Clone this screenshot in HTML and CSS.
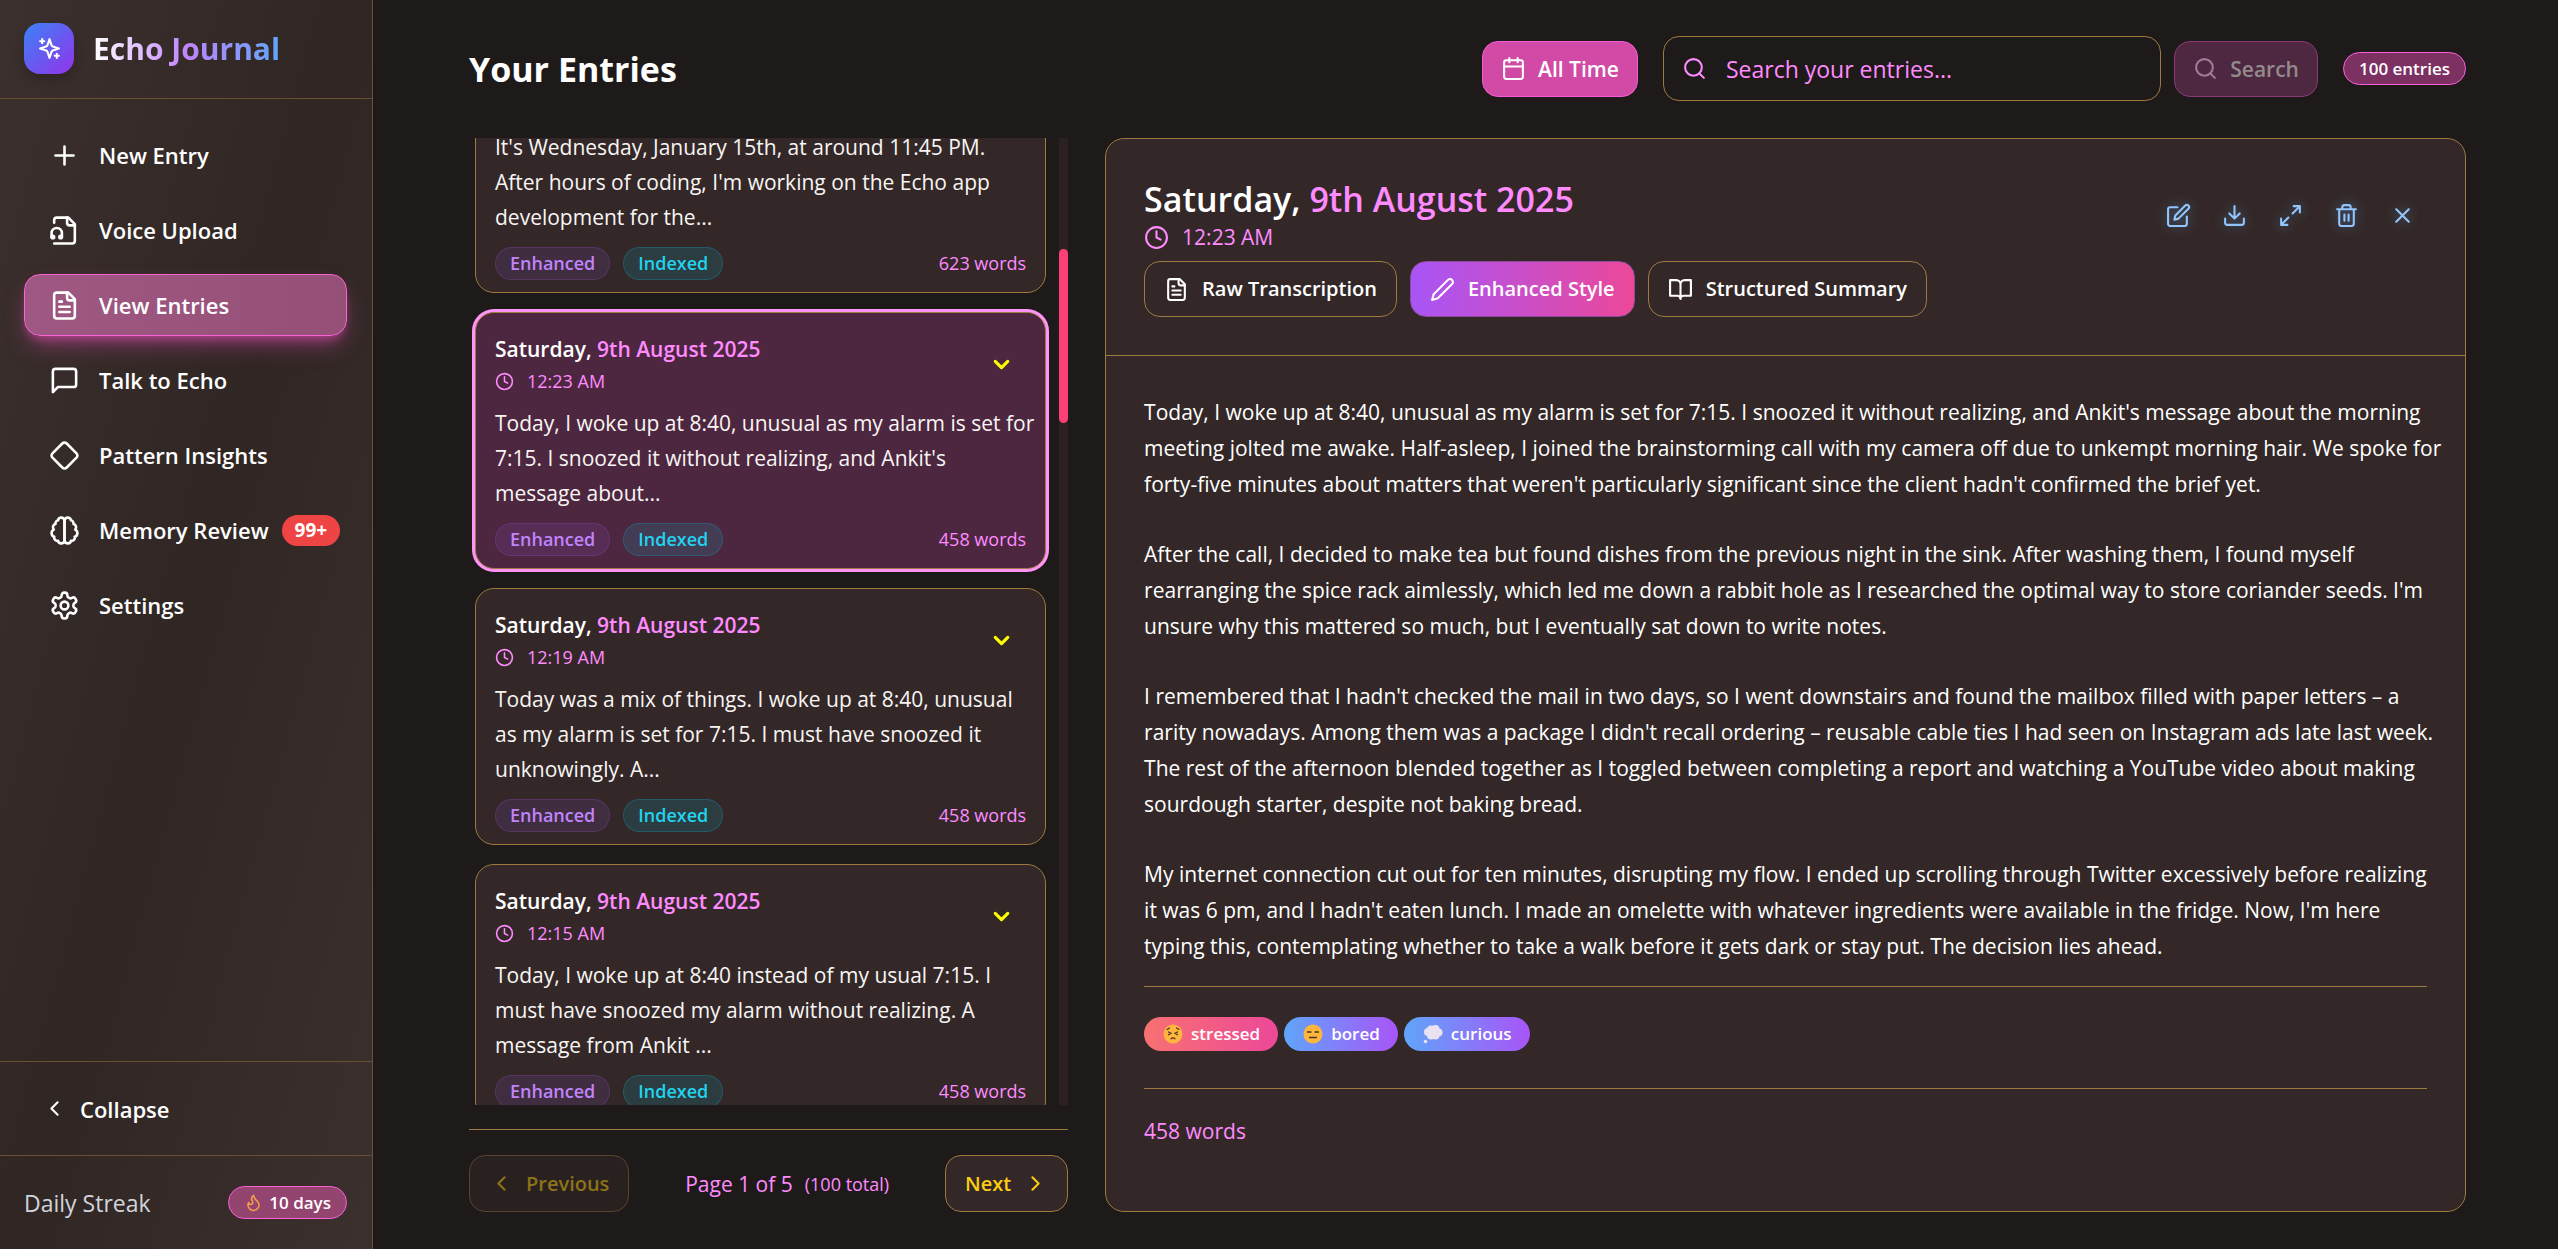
FILE: index.html
```html
<!DOCTYPE html>
<html lang="en">
<head>
<meta charset="utf-8">
<title>Echo Journal</title>
<link rel="stylesheet" href="styles.css">
</head>
<body>
<svg class="sprite" aria-hidden="true">
  <symbol id="i-sparkles" viewBox="0 0 24 24"><path d="m12 3-1.912 5.813a2 2 0 0 1-1.275 1.275L3 12l5.813 1.912a2 2 0 0 1 1.275 1.275L12 21l1.912-5.813a2 2 0 0 1 1.275-1.275L21 12l-5.813-1.912a2 2 0 0 1-1.275-1.275L12 3Z"/><path d="M5 3v4M19 17v4M3 5h4M17 19h4"/></symbol>
  <symbol id="i-plus" viewBox="0 0 24 24"><path d="M5 12h14M12 5v14"/></symbol>
  <symbol id="i-audio" viewBox="0 0 24 24"><path d="M4 22h14a2 2 0 0 0 2-2V7l-5-5H6a2 2 0 0 0-2 2v2"/><path d="M14 2v4a2 2 0 0 0 2 2h4"/><circle cx="3" cy="17" r="1"/><path d="M2 17v-3a4 4 0 0 1 8 0v3"/><circle cx="9" cy="17" r="1"/></symbol>
  <symbol id="i-file" viewBox="0 0 24 24"><path d="M15 2H6a2 2 0 0 0-2 2v16a2 2 0 0 0 2 2h12a2 2 0 0 0 2-2V7Z"/><path d="M14 2v4a2 2 0 0 0 2 2h4M10 9H8M16 13H8M16 17H8"/></symbol>
  <symbol id="i-chat" viewBox="0 0 24 24"><path d="M21 15a2 2 0 0 1-2 2H7l-4 4V5a2 2 0 0 1 2-2h14a2 2 0 0 1 2 2z"/></symbol>
  <symbol id="i-diamond" viewBox="0 0 24 24"><path d="M2.7 10.3a2.41 2.41 0 0 0 0 3.41l7.59 7.59a2.41 2.41 0 0 0 3.41 0l7.59-7.59a2.41 2.41 0 0 0 0-3.41l-7.59-7.59a2.41 2.41 0 0 0-3.41 0Z"/></symbol>
  <symbol id="i-brain" viewBox="0 0 24 24"><path d="M9.5 2A2.5 2.5 0 0 1 12 4.5v15a2.5 2.5 0 0 1-4.96.44 2.5 2.5 0 0 1-2.96-3.08 3 3 0 0 1-.34-5.58 2.5 2.5 0 0 1 1.32-4.24 2.5 2.5 0 0 1 1.98-3A2.5 2.5 0 0 1 9.5 2Z"/><path d="M14.5 2A2.5 2.5 0 0 0 12 4.5v15a2.5 2.5 0 0 0 4.96.44 2.5 2.5 0 0 0 2.96-3.08 3 3 0 0 0 .34-5.58 2.5 2.5 0 0 0-1.32-4.24 2.5 2.5 0 0 0-1.98-3A2.5 2.5 0 0 0 14.5 2Z"/></symbol>
  <symbol id="i-gear" viewBox="0 0 24 24"><path d="M12.22 2h-.44a2 2 0 0 0-2 2v.18a2 2 0 0 1-1 1.73l-.43.25a2 2 0 0 1-2 0l-.15-.08a2 2 0 0 0-2.73.73l-.22.38a2 2 0 0 0 .73 2.73l.15.1a2 2 0 0 1 1 1.72v.51a2 2 0 0 1-1 1.74l-.15.09a2 2 0 0 0-.73 2.73l.22.38a2 2 0 0 0 2.73.73l.15-.08a2 2 0 0 1 2 0l.43.25a2 2 0 0 1 1 1.73V20a2 2 0 0 0 2 2h.44a2 2 0 0 0 2-2v-.18a2 2 0 0 1 1-1.73l.43-.25a2 2 0 0 1 2 0l.15.08a2 2 0 0 0 2.73-.73l.22-.39a2 2 0 0 0-.73-2.73l-.15-.08a2 2 0 0 1-1-1.74v-.5a2 2 0 0 1 1-1.74l.15-.09a2 2 0 0 0 .73-2.73l-.22-.38a2 2 0 0 0-2.73-.73l-.15.08a2 2 0 0 1-2 0l-.43-.25a2 2 0 0 1-1-1.73V4a2 2 0 0 0-2-2z"/><circle cx="12" cy="12" r="3"/></symbol>
  <symbol id="i-left" viewBox="0 0 24 24"><path d="m15 18-6-6 6-6"/></symbol>
  <symbol id="i-right" viewBox="0 0 24 24"><path d="m9 18 6-6-6-6"/></symbol>
  <symbol id="i-down" viewBox="0 0 24 24"><path d="m6 9 6 6 6-6"/></symbol>
  <symbol id="i-flame" viewBox="0 0 24 24"><path d="M8.5 14.5A2.5 2.5 0 0 0 11 12c0-1.38-.5-2-1-3-1.072-2.143-.224-4.054 2-6 .5 2.5 2 4.9 4 6.5 2 1.6 3 3.5 3 5.5a7 7 0 1 1-14 0c0-1.153.433-2.294 1-3a2.5 2.5 0 0 0 2.5 2.5z"/></symbol>
  <symbol id="i-calendar" viewBox="0 0 24 24"><rect x="3" y="4" width="18" height="18" rx="2"/><path d="M16 2v4M8 2v4M3 10h18"/></symbol>
  <symbol id="i-search" viewBox="0 0 24 24"><circle cx="11" cy="11" r="8"/><path d="m21 21-4.3-4.3"/></symbol>
  <symbol id="i-clock" viewBox="0 0 24 24"><circle cx="12" cy="12" r="10"/><path d="M12 6v6l4 2"/></symbol>
  <symbol id="i-pen" viewBox="0 0 24 24"><path d="M17 3a2.85 2.83 0 1 1 4 4L7.5 20.5 2 22l1.5-5.5Z"/></symbol>
  <symbol id="i-book" viewBox="0 0 24 24"><path d="M2 3h6a4 4 0 0 1 4 4v14a3 3 0 0 0-3-3H2zM22 3h-6a4 4 0 0 0-4 4v14a3 3 0 0 1 3-3h7z"/></symbol>
  <symbol id="i-edit" viewBox="0 0 24 24"><path d="M11 4H4a2 2 0 0 0-2 2v14a2 2 0 0 0 2 2h14a2 2 0 0 0 2-2v-7"/><path d="M18.5 2.5a2.12 2.12 0 0 1 3 3L12 15l-4 1 1-4Z"/></symbol>
  <symbol id="i-download" viewBox="0 0 24 24"><path d="M21 15v4a2 2 0 0 1-2 2H5a2 2 0 0 1-2-2v-4M7 10l5 5 5-5M12 15V3"/></symbol>
  <symbol id="i-expand" viewBox="0 0 24 24"><path d="M15 3h6v6M9 21H3v-6M21 3l-7 7M3 21l7-7"/></symbol>
  <symbol id="i-trash" viewBox="0 0 24 24"><path d="M3 6h18M19 6v14c0 1-1 2-2 2H7c-1 0-2-1-2-2V6M8 6V4c0-1 1-2 2-2h4c1 0 2 1 2 2v2M10 11v6M14 11v6"/></symbol>
  <symbol id="i-close" viewBox="0 0 24 24"><path d="M18 6 6 18M6 6l12 12"/></symbol>
</svg>

<div class="app">
  <aside class="sidebar">
    <div class="brand">
      <span class="logo"><svg class="icon"><use href="#i-sparkles"/></svg></span>
      <span class="brand-name">Echo Journal</span>
    </div>
    <nav class="nav">
      <a class="nav-item" href="#new"><svg class="icon"><use href="#i-plus"/></svg>New Entry</a>
      <a class="nav-item" href="#voice"><svg class="icon"><use href="#i-audio"/></svg>Voice Upload</a>
      <a class="nav-item active" href="#entries" aria-current="page"><svg class="icon"><use href="#i-file"/></svg>View Entries</a>
      <a class="nav-item" href="#talk"><svg class="icon"><use href="#i-chat"/></svg>Talk to Echo</a>
      <a class="nav-item" href="#patterns"><svg class="icon"><use href="#i-diamond"/></svg>Pattern Insights</a>
      <a class="nav-item" href="#memory"><svg class="icon"><use href="#i-brain"/></svg>Memory Review<span class="count">99+</span></a>
      <a class="nav-item" href="#settings"><svg class="icon"><use href="#i-gear"/></svg>Settings</a>
    </nav>
    <div class="collapse-row">
      <button class="collapse" type="button"><svg class="icon"><use href="#i-left"/></svg>Collapse</button>
    </div>
    <div class="streak">
      <span class="streak-label">Daily Streak</span>
      <span class="pill"><svg class="icon flame"><use href="#i-flame"/></svg>10 days</span>
    </div>
  </aside>

  <main class="main">
    <header class="topbar">
      <h1>Your Entries</h1>
      <button class="btn btn-pink" type="button"><svg class="icon"><use href="#i-calendar"/></svg>All Time</button>
      <form class="search">
        <label class="search-box">
          <svg class="icon"><use href="#i-search"/></svg>
          <input type="text" aria-label="Search your entries" placeholder="Search your entries...">
        </label>
        <button class="btn btn-search" type="submit" disabled><svg class="icon"><use href="#i-search"/></svg>Search</button>
      </form>
      <span class="pill total">100 entries</span>
    </header>

    <div class="columns">
      <section class="list-column">
        <div class="list-wrap">
          <div class="entries" id="entries">
            <article class="card">
              <p class="excerpt">It's Wednesday, January 15th, at around 11:45 PM. After&nbsp;hours of coding, I'm working on the Echo app development for the...</p>
              <footer class="card-foot"><span class="tag enhanced">Enhanced</span><span class="tag indexed">Indexed</span><span class="words">623 words</span></footer>
            </article>
            <article class="card selected">
              <header class="card-head">
                <div><h2>Saturday, <em>9th August 2025</em></h2><p class="time"><svg class="icon"><use href="#i-clock"/></svg>12:23 AM</p></div>
                <button class="expand" type="button" aria-label="Expand entry"><svg class="icon"><use href="#i-down"/></svg></button>
              </header>
              <p class="excerpt">Today, I woke up at 8:40, unusual as my alarm is set for 7:15. I snoozed it without realizing, and Ankit's message&nbsp;about...</p>
              <footer class="card-foot"><span class="tag enhanced">Enhanced</span><span class="tag indexed">Indexed</span><span class="words">458 words</span></footer>
            </article>
            <article class="card">
              <header class="card-head">
                <div><h2>Saturday, <em>9th August 2025</em></h2><p class="time"><svg class="icon"><use href="#i-clock"/></svg>12:19 AM</p></div>
                <button class="expand" type="button" aria-label="Expand entry"><svg class="icon"><use href="#i-down"/></svg></button>
              </header>
              <p class="excerpt">Today was a mix of things. I woke up at 8:40, unusual as&nbsp;my alarm is set for 7:15. I must have snoozed it unknowingly. A...</p>
              <footer class="card-foot"><span class="tag enhanced">Enhanced</span><span class="tag indexed">Indexed</span><span class="words">458 words</span></footer>
            </article>
            <article class="card">
              <header class="card-head">
                <div><h2>Saturday, <em>9th August 2025</em></h2><p class="time"><svg class="icon"><use href="#i-clock"/></svg>12:15 AM</p></div>
                <button class="expand" type="button" aria-label="Expand entry"><svg class="icon"><use href="#i-down"/></svg></button>
              </header>
              <p class="excerpt">Today, I woke up at 8:40 instead of my usual 7:15. I must have snoozed my alarm without realizing. A message from Ankit ...</p>
              <footer class="card-foot"><span class="tag enhanced">Enhanced</span><span class="tag indexed">Indexed</span><span class="words">458 words</span></footer>
            </article>
          </div>
          <div class="track"><div class="thumb"></div></div>
        </div>
        <div class="pager">
          <button class="page-btn prev" type="button" disabled><svg class="icon"><use href="#i-left"/></svg>Previous</button>
          <p class="page-info">Page 1 of 5 <small>(100 total)</small></p>
          <button class="page-btn next" type="button">Next<svg class="icon"><use href="#i-right"/></svg></button>
        </div>
      </section>

      <article class="detail">
        <header class="detail-head">
          <div class="detail-top">
            <div>
              <h2 class="detail-title">Saturday, <em>9th August 2025</em></h2>
              <p class="detail-time"><svg class="icon"><use href="#i-clock"/></svg>12:23 AM</p>
            </div>
            <div class="actions">
              <button type="button" aria-label="Edit"><svg class="icon"><use href="#i-edit"/></svg></button>
              <button type="button" aria-label="Download"><svg class="icon"><use href="#i-download"/></svg></button>
              <button type="button" aria-label="Full screen"><svg class="icon"><use href="#i-expand"/></svg></button>
              <button type="button" aria-label="Delete"><svg class="icon"><use href="#i-trash"/></svg></button>
              <button type="button" aria-label="Close"><svg class="icon"><use href="#i-close"/></svg></button>
            </div>
          </div>
          <div class="tabs">
            <button class="btn" type="button"><svg class="icon"><use href="#i-file"/></svg>Raw Transcription</button>
            <button class="btn current" type="button"><svg class="icon"><use href="#i-pen"/></svg>Enhanced Style</button>
            <button class="btn" type="button"><svg class="icon"><use href="#i-book"/></svg>Structured Summary</button>
          </div>
        </header>
        <div class="detail-body">
          <div class="prose">
            <p>Today, I woke up at 8:40, unusual as my alarm is set for 7:15. I snoozed it without realizing, and Ankit's message about the morning meeting jolted me awake. Half-asleep, I joined the brainstorming call with my camera off due to unkempt morning hair. We spoke for forty-five minutes about matters that weren't particularly significant since the client hadn't confirmed the brief yet.</p>
            <p>After the call, I decided to make tea but found dishes from the previous night in the sink. After washing them, I found myself rearranging the spice rack aimlessly, which led me down a rabbit hole as I researched the optimal way to store coriander seeds. I'm unsure why this mattered so much, but I eventually sat down to write notes.</p>
            <p>I remembered that I hadn't checked the mail in two days, so I went downstairs and found the mailbox filled with paper letters – a rarity nowadays. Among them was a package I didn't recall ordering – reusable cable ties I had seen on Instagram ads late last week. The rest of the afternoon blended together as I toggled between completing a report and watching a YouTube video about making sourdough starter, despite not baking bread.</p>
            <p>My internet connection cut out for ten minutes, disrupting my flow. I ended up scrolling through Twitter excessively before realizing it&nbsp;was 6 pm, and I hadn't eaten lunch. I made an omelette with whatever ingredients were available in the fridge. Now, I'm here typing&nbsp;this, contemplating whether to take a walk before it gets dark or stay put. The decision lies ahead.</p>
          </div>
          <div class="moods">
            <span class="mood hot"><svg class="emoji" viewBox="0 0 20 20"><circle cx="10" cy="10" r="9.500" fill="#ffb63c"/><path d="M4 5.500 6.500 4M16 5.500 13.500 4M5.500 8l2.500 1.300-2.500 1.300M14.500 8 12 9.300l2.500 1.300M8 14.800c1-1.300 3-1.300 4 0" fill="none" stroke="#4a2f2a" stroke-width="1.200" stroke-linecap="round"/></svg>stressed</span>
            <span class="mood cool"><svg class="emoji" viewBox="0 0 20 20"><circle cx="10" cy="10" r="9.500" fill="#ffb63c"/><path d="M4.500 8h3.500M12 8h3.500M6.500 13.500h7" fill="none" stroke="#4a2f2a" stroke-width="1.300" stroke-linecap="round"/></svg>bored</span>
            <span class="mood cool"><svg class="emoji" viewBox="0 0 20 20"><g fill="#e9e3f1"><circle cx="5" cy="8" r="4"/><circle cx="8" cy="5.500" r="4"/><circle cx="12.500" cy="5" r="4"/><circle cx="15.500" cy="8.500" r="4"/><circle cx="12.500" cy="11.500" r="4"/><circle cx="8" cy="11.500" r="4"/><circle cx="2.500" cy="17.500" r="1.800"/></g></svg>curious</span>
          </div>
          <p class="detail-words">458 words</p>
        </div>
      </article>
    </div>
  </main>
</div>
<script src="scroll.js"></script>
</body>
</html>
```
FILE: styles.css
```css
:root {
  --bg: #1e1a19;
  --surface: #332827;
  --gold: #9c7a40;
  --gold-dim: #6a5032;
  --pink: #ff8bff;
  --magenta: #fb5fdc;
  --ink: #ffffff;
}
* { box-sizing: border-box; margin: 0; }
body {
  background: var(--bg);
  color: var(--ink);
  font: 400 21px/36px "Open Sans", "Noto Sans", sans-serif;
}
button, input { font: inherit; color: inherit; }
button { border: 0; background: none; padding: 0; }
a { color: inherit; text-decoration: none; }
em { font-style: normal; color: var(--pink); }
.sprite { position: absolute; width: 0; height: 0; }
.icon {
  width: 25px;
  height: 25px;
  flex: none;
  fill: none;
  stroke: currentColor;
  stroke-width: 2;
  stroke-linecap: round;
  stroke-linejoin: round;
}

.app { display: flex; height: 100vh; min-height: 900px; }

/* Sidebar */
.sidebar {
  width: 373px;
  flex: none;
  display: flex;
  flex-direction: column;
  border-right: 1px solid var(--gold-dim);
  background: linear-gradient(105deg, #3b302d 0%, #302624 50%, #3b302d 100%);
  font-size: 22px;
}
.brand {
  display: flex;
  align-items: center;
  gap: 19px;
  padding: 23px 24px 24px;
  border-bottom: 1px solid var(--gold-dim);
}
.logo {
  display: grid;
  place-items: center;
  width: 50px;
  height: 51px;
  border-radius: 16px;
  background: linear-gradient(135deg, #3b82f6, #9333ea);
  box-shadow: 0 6px 12px rgba(0, 0, 0, .2);
}
.brand-name {
  font-size: 30px;
  font-weight: 700;
  background: linear-gradient(90deg, #fff, #c084fc 50%, #60a5fa);
  background-clip: text;
  color: transparent;
}
.nav { flex: 1; display: flex; flex-direction: column; gap: 13px; padding: 25px; padding-left: 24px; }
.nav-item {
  display: flex;
  align-items: center;
  gap: 19px;
  height: 62px;
  padding: 0 24px;
  border: 1px solid transparent;
  border-radius: 16px;
  font-weight: 600;
  white-space: nowrap;
}
.nav-item .icon { width: 31px; height: 31px; }
.nav-item.active {
  background: linear-gradient(90deg, #9f5881, #955078);
  border-color: #fb62d8;
  box-shadow: 0 12px 24px -6px rgba(240, 80, 190, .5), 0 6px 10px -4px rgba(240, 80, 190, .5);
}
.count {
  margin-left: -6px;
  padding: 0 13px;
  border-radius: 16px;
  background: #ef4444;
  font-size: 19px;
  font-weight: 700;
  line-height: 31px;
}
.collapse-row { padding: 16px 24px; border-top: 1px solid var(--gold-dim); }
.collapse { display: flex; align-items: center; gap: 13px; height: 61px; padding: 0 18px; font-weight: 600; }
.streak {
  display: flex;
  align-items: center;
  justify-content: space-between;
  height: 94px;
  padding: 0 25px 0 24px;
  border-top: 1px solid var(--gold-dim);
  color: #d1d5db;
}
.streak-label { font-size: 23px; }
.pill {
  display: flex;
  align-items: center;
  gap: 6px;
  height: 33px;
  padding: 0 15px;
  border: 1px solid var(--magenta);
  border-radius: 17px;
  background: #93456f;
  color: var(--ink);
  font-size: 17px;
  font-weight: 600;
  white-space: nowrap;
}
.icon.flame { width: 19px; height: 19px; color: #f5a04a; }

/* Top bar */
.main {
  flex: 1;
  min-width: 0;
  display: flex;
  flex-direction: column;
  padding: 0 92px 37px 96px;
}
.topbar { display: flex; align-items: center; gap: 25px; padding: 36px 0 37px; }
h1 { margin-right: auto; font-size: 34px; line-height: 44px; font-weight: 700; white-space: nowrap; }
.btn {
  display: flex;
  align-items: center;
  gap: 12px;
  height: 56px;
  padding: 0 18px;
  border: 1px solid var(--gold);
  border-radius: 16px;
  font-weight: 600;
  white-space: nowrap;
}
.btn-pink { background: #d14aa5; border-color: #f85ad6; }
.search { display: flex; align-items: center; gap: 13px; flex: 0 1 655px; }
.search-box {
  flex: 1;
  display: flex;
  align-items: center;
  gap: 19px;
  height: 65px;
  padding: 0 18px;
  border: 1px solid var(--gold);
  border-radius: 16px;
  color: var(--pink);
}
.search-box input { flex: 1; min-width: 0; border: 0; padding: 0; background: none; outline: 0; font-size: 23px; }
.search-box input::placeholder { color: var(--pink); opacity: 1; }
.btn-search { background: #4e2740; border-color: #8b3a78; color: #928b8e; }
.btn-search .icon { color: #a07c97; }
.total { background: #7d3163; padding: 0 15px; }

/* Columns */
.columns { flex: 1; min-height: 0; display: grid; grid-template-columns: 30% 1fr; gap: 37px; }
.list-column { display: flex; flex-direction: column; min-height: 0; }
.list-wrap { flex: 1; min-height: 0; display: flex; }
.entries {
  flex: 1;
  display: flex;
  flex-direction: column;
  gap: 19px;
  padding: 0 13px 0 6px;
  overflow: hidden;
}
.track { position: relative; width: 9px; background: #2b2120; }
.thumb {
  position: absolute;
  top: 11.5%;
  width: 100%;
  height: 18%;
  border-radius: 5px;
  background: #fb3f77;
}
.card {
  flex: none;
  padding: 19px 19px 12px;
  border: 1px solid var(--gold);
  border-radius: 19px;
  background: var(--surface);
}
.card.selected { background: #4d273f; box-shadow: 0 0 0 3px #ff93f8; }
.card-head { display: flex; justify-content: space-between; align-items: center; margin-bottom: 10px; }
.card h2 { font-size: 21px; line-height: 34px; font-weight: 600; }
.card .time { display: flex; align-items: center; gap: 13px; font-size: 18px; line-height: 30px; color: var(--pink); }
.card .time .icon { width: 19px; height: 19px; }
.expand { display: grid; place-items: center; width: 50px; height: 50px; color: #ffff00; }
.expand .icon { stroke-width: 3; }
.excerpt { margin: 0 -14px 12px 0; line-height: 35px; color: #f8f5f4; }
.card-foot { display: flex; align-items: center; gap: 13px; font-size: 18px; line-height: 31px; }
.tag { padding: 0 14px; border: 1px solid; border-radius: 17px; font-weight: 600; }
.enhanced { background: rgba(168, 85, 247, .12); border-color: rgba(168, 85, 247, .2); color: #c084fc; }
.indexed { background: rgba(6, 182, 212, .15); border-color: rgba(6, 182, 212, .25); color: #22d3ee; }
.words { margin-left: auto; color: var(--pink); }

/* Pager */
.pager {
  display: flex;
  justify-content: space-between;
  align-items: center;
  margin-top: 24px;
  padding-top: 25px;
  border-top: 1px solid var(--gold);
}
.page-btn {
  display: flex;
  align-items: center;
  gap: 12px;
  height: 57px;
  padding: 0 19px;
  border: 1px solid var(--gold);
  border-radius: 16px;
  background: var(--surface);
  color: #facc15;
  font-size: 20px;
  font-weight: 600;
}
.page-btn.prev { background: #292120; border-color: #56442f; color: #8c7318; }
.page-info { display: flex; align-items: center; gap: 12px; color: var(--pink); }
.page-info small { font-size: 18px; }

/* Detail */
.detail {
  display: flex;
  flex-direction: column;
  min-height: 0;
  min-width: 0;
  border: 1px solid var(--gold);
  border-radius: 19px;
  background: var(--surface);
}
.detail-head { padding: 38px; border-bottom: 1px solid var(--gold); }
.detail-top { display: flex; justify-content: space-between; align-items: center; margin-bottom: 8px; }
.detail-title { font-size: 34px; line-height: 44px; font-weight: 600; }
.detail-time { display: flex; align-items: center; gap: 13px; line-height: 32px; color: var(--pink); }
.actions { display: flex; gap: 6px; color: #93c5fd; }
.actions button { display: grid; place-items: center; width: 50px; height: 50px; }
.actions .icon { filter: drop-shadow(0 0 6px rgba(96, 165, 250, .5)); }
.tabs { display: flex; gap: 13px; }
.tabs .btn { gap: 13px; padding: 0 19px; font-size: 20px; }
.tabs .current { background: linear-gradient(90deg, #a855f7, #ec4899); border-color: #8d4a9a; }
.detail-body { padding: 38px; }
.prose { display: flex; flex-direction: column; gap: 34px; margin-right: -24px; padding-bottom: 22px; }
.moods { display: flex; gap: 6px; padding: 30px 0 37px; border: solid var(--gold); border-width: 1px 0; }
.mood {
  display: flex;
  align-items: center;
  gap: 8px;
  height: 34px;
  padding: 0 18px 0 19px;
  border-radius: 17px;
  font-size: 17px;
  font-weight: 600;
}
.mood.hot { background: linear-gradient(90deg, #f87171, #ec4899); }
.mood.cool { background: linear-gradient(90deg, #60a5fa, #a855f7); }
.emoji { width: 20px; height: 20px; flex: none; }
.detail-words { margin-top: 24px; color: var(--pink); }
```
FILE: scroll.js
```js
// Bring the selected entry near the top of the list.
var list = document.getElementById("entries");
var selected = list.querySelector(".selected");
list.scrollTop = selected.offsetTop - list.offsetTop - 174;
```
